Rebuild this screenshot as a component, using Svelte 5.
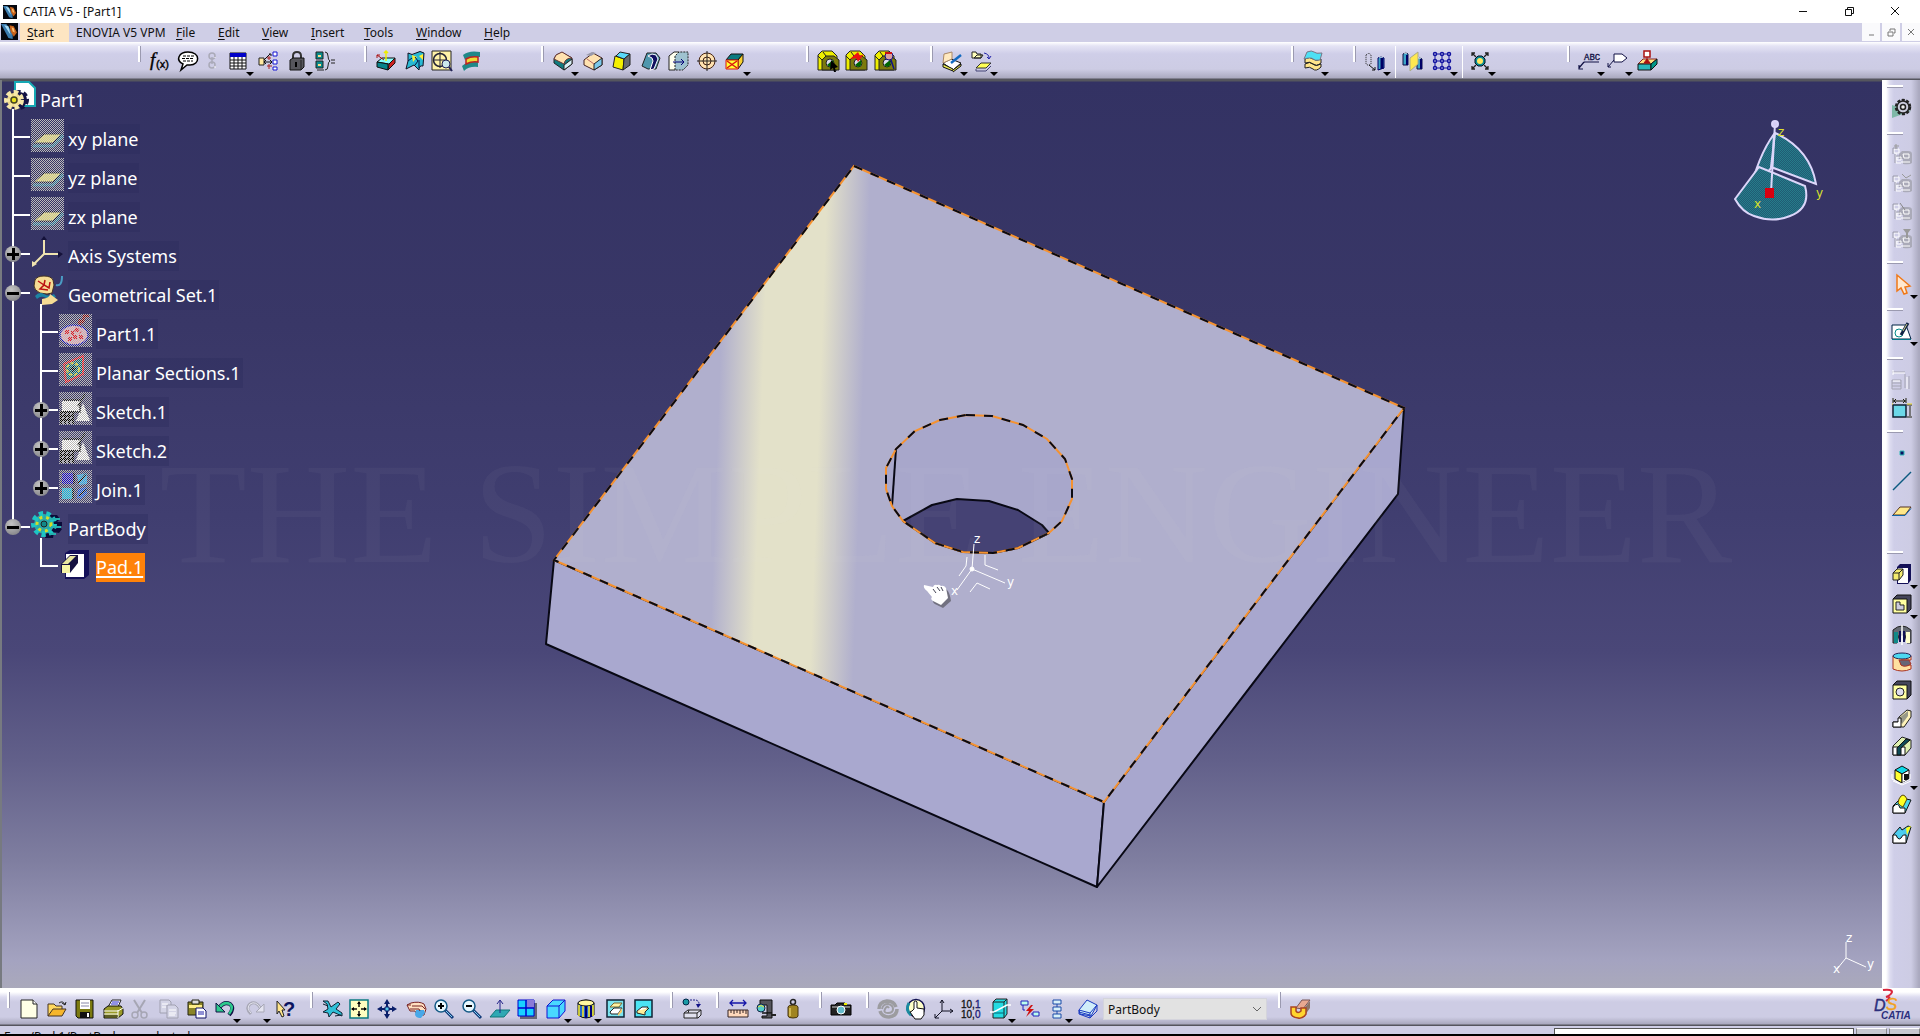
<script>
  const plate = `<path d="M1 5 5 1h14v14l-4 4z" fill="#44445a" stroke="#111"/><path d="M1 5h14v14H1z" fill="#ffffa0" stroke="#111"/>`;
  const catalogNode = (extra) =>
    `<path d="M10 6h6q4 0 4 3v9q-2 2-9 1v-5H7V9z" fill="#aaaab8"/><g fill="none" stroke="#fff"><path d="M2 4h5v4H2zM5 12h4v3H5zM4 8v10h5M11 9h6v4h-5zM9 17h9"/></g><path d="M1 3h5M1 3v6M4 11h4M3 9v9" stroke="#9c9cac" fill="none"/>${extra}`;
  const magnify = (sign) =>
    `<path d="m11 11 8 8" stroke="#123a7a" stroke-width="3"/><path d="m12 12 6 6" stroke="#7fd0ee"/><circle cx="7" cy="7" r="6" fill="#e8f8ff" stroke="#145a86" stroke-width="1.5"/><path d="${sign}" stroke="#000" stroke-width="2"/>`;
  const nut = (over) =>
    `<path d="M0 4 4 0h10l5 5v14H0z" fill="#ee0" stroke="#222"/><path d="M4 19V9l4-4h8l5 4v10z" fill="#7c7a0c" stroke="#222"/><path d="M4 9 0 5M8 5 5 1" stroke="#222"/><circle cx="12" cy="12" r="4" fill="#dde" stroke="#222"/><path d="M9 14l6-5q2 6-3 7z" fill="#060"/>${over}`;

  const icons = {
    formula: `<text x="0" y="15" font-family="Liberation Serif, serif" font-style="italic" font-size="19" stroke="#000" stroke-width=".4">f</text><text x="6" y="17" font-family="Liberation Sans, sans-serif" font-size="11" stroke="#000" stroke-width=".4">(x)</text>`,
    comment: `<path d="M10 1c13 0 12 13 2 13H9l-6 5 2-6C-3 9 1 1 10 1z" fill="#fff" stroke="#000" stroke-width="1.5"/><path d="M5 5h11M4 7.500h12M5 10h10" stroke="#000" stroke-dasharray="3 1"/>`,
    link: `<g fill="none" stroke="#aaaab8" stroke-width="1.500"><circle cx="9" cy="5" r="3"/><circle cx="9" cy="14" r="3"/><path d="M9 6v7"/></g><path d="M12 6v1M12 15v2" stroke="#fff"/>`,
    table: `<path d="M2 2h16v16H2z" fill="#fff" stroke="#111"/><path d="M2 2h16v4H2z" fill="#0000c8"/><path d="M2 9h16M2 12h16M2 15h16M6 6v12M10 6v12M14 6v12" stroke="#111"/>`,
    graph: `<path d="M1 7h5v7H1z" fill="#ffe9a0" stroke="#222"/><g fill="#fff" stroke="#1414d2"><path d="M15 1h4v4h-4zM15 9h4v4h-4zM15 16h4v3h-4z"/></g><path d="M6 9l6-6M7 11h7M11 3h2v2M8 9l-2 2 2 2M12 9l2 2-2 2" fill="none" stroke="#111"/><path d="M9 7h4M11 5v4M9 15h5M11 13v5" stroke="#a22"/>`,
    lock: `<path d="M6 9V5q0-4 4-4t4 4v4" fill="none" stroke="#333" stroke-width="2"/><path d="M3 9l3-2h11v9l-3 3H3z" fill="#56565c" stroke="#111"/><path d="M14 9v10" stroke="#222"/><path d="M8 11h2v5H8z"/>`,
    equiv: `<g fill="#098a8a" stroke="#222"><path d="M1 1h7v7H1zM1 10h7v7H1z"/></g><path d="M3 4h3v2H3zM3 13h3v2H3z" fill="#ffd98a"/><path d="M10 1q3 0 3 4t2 5q-2 1-2 5t-3 4M16 9h4M16 12h4M2 19h7" fill="none" stroke="#222"/>`,
    padTop: `<path d="M1 11 6 7h13l-6 6z" fill="#8ff" stroke="#111"/><path d="M1 11v5l11 3v-6z" fill="#07838a" stroke="#111"/><path d="m13 13 6-6v5l-7 7z" fill="#c22" stroke="#111"/><path d="M10 10V0M8 2l2-2 2 2" stroke="#ee0" fill="none" stroke-width="1.500"/><path d="M8 9 1 4M1 7V4h3" stroke="#a11" fill="none"/>`,
    surface: `<path d="M3 2q4 3 8 0t8 0l-1 13q-4-1-4 4l-5-5-8 4 2-8z" fill="#28b9d4" stroke="#112"/><path d="M7 4l5 2-4 5zM14 5l4-2v6z" fill="#fe3"/><path d="M3 10l4-3M10 6l3 4-3 4M14 9v8" stroke="#014" fill="none"/>`,
    target: `<path d="M0 0h19v19H0z" fill="#fff3a8" stroke="#222"/><circle cx="8" cy="9" r="6.500" fill="none" stroke="#223" stroke-width="1.500"/><path d="M8 1v16M1 9h14" stroke="#223"/><circle cx="14" cy="13" r="4" fill="#cce8ee" stroke="#225"/><path d="m17 16 3 4" stroke="#225" stroke-width="2"/>`,
    draft: `<path d="M2 4q6-5 17-3v5q-12-1-15 3zM1 15q6-5 16-4v5Q8 15 3 20z" fill="#208888"/><path d="M5 8q5-3 12-2v5q-6-1-12 2z" fill="#ed3" stroke="#b22" stroke-width="1.500"/>`,
    fillet: `<path d="M1 8q2-6 9-6l9 5v6l-8 6-10-7z" fill="#117c80" stroke="#222"/><path d="M3 4l6-3 10 6q-7 0-8 6L1 8z" fill="#ffe2b0" stroke="#633"/><path d="m11 14 8-6v5l-8 6z" fill="#d8eef4" stroke="#222"/>`,
    chamfer: `<path d="M1 9l9-7 9 5v7l-8 5-10-5z" fill="#ffe2b0" stroke="#422"/><path d="m11 19V13l8-6v7z" fill="#7cc8ea" stroke="#222"/><path d="M11 13 4 8" stroke="#b66"/><path d="M3 4 9 1l4 1-5 3z" fill="#99a"/>`,
    draftAngle: `<path d="M3 5l9 3-1 11-10-3z" fill="#f4f000" stroke="#222"/><path d="M4 5 8 1l10 2-6 5z" fill="#58d8f8" stroke="#222"/><path d="m12 8 6-5v11l-7 5z" fill="#666a70" stroke="#222"/>`,
    shell: `<path d="M6 2h9l4 5-4 11H7l-6-3z" fill="#4f97ad" stroke="#222"/><path d="M7 5l4-2 4 1 2 4-4 10-4 1 3-9-1-3z" fill="#101060" stroke="#fff"/>`,
    thickness: `<path d="M0 5 5 1h5v14l-4 4H0z" fill="#ffe" stroke="#222"/><path d="M6 19V5l4-4h9v13l-5 5z" fill="#9fc2d0" stroke="#222" stroke-dasharray="2 1"/><path d="M4 11h11M12 8l3 3-3 3" stroke="#007" fill="none"/>`,
    thread: `<circle cx="10" cy="10" r="8" fill="#ffe2b0" stroke="#421"/><circle cx="10" cy="10" r="4" fill="none" stroke="#421"/><path d="M10 0v20M0 10h20" stroke="#222"/>`,
    removeFace: `<path d="M1 9 6 3h12l-5 6z" fill="#0a7a80" stroke="#111"/><path d="m13 9 5-6v8l-5 7z" fill="#f9d030" stroke="#111"/><path d="M1 9h12v9H1z" fill="#ff3" stroke="#d11"/><path d="m2 10 10 7M12 10 2 17" stroke="#d11" stroke-width="1.500"/>`,
    nutPick: nut(`<path d="m13 9 7 7-3 1 1 4h-2l-1-4-3 2z" fill="#000"/>`),
    nutBolt: nut(`<path d="M4 8 12 1l2 4 4-2-6 8-2-4z" fill="#e11"/>`),
    nutScan: nut(`<circle cx="14" cy="5" r="4" fill="#d9a0a0" stroke="#118"/><path d="M10 2h7" stroke="#c11" stroke-width="2"/><path d="m16 9 3 9" stroke="#118" stroke-width="1.500"/>`),
    sketchBook: `<path d="M1 12l8-4 10 4-8 7z" fill="#fff" stroke="#111"/><path d="M1 12l1-9 8-2 0 7z" fill="#ffe9c0" stroke="#a86"/><path d="m9 12 10-8" stroke="#126ac0" stroke-width="2.500"/><path d="M1 13v3l10 4v-2z" fill="#ee5" stroke="#111"/><path d="M11 19l8-6v2l-8 6" fill="#ee5" stroke="#111"/>`,
    openSketch: `<path d="M0 7V1h4l1 2h4v4zM2 7l3-3h6l-2 3z" fill="#ffb" stroke="#222"/><path d="M12 2q5 1 5 5M15 6l2 2 2-3" fill="none" stroke="#22a"/><path d="M4 17l5-5h10l-5 5z" fill="#ff5" stroke="#333"/><path d="M4 18v2h10l5-5" fill="none" stroke="#447"/>`,
    layers: `<path d="M2 13q5-3 8 0t8 0v3q-5 5-8 2T2 17zM2 8q5-3 8 0t8 0v4q-5 4-8 1T2 12z" fill="#ffe48a" stroke="#222"/><path d="M4 1q5-2 7 0t8 1l-2 7q-5 1-7-1T1 8z" fill="#4de0f4" stroke="#778"/>`,
    moveBody: `<path d="M1 4q3-3 5 0v9q-3 2-5 0z" fill="none" stroke="#222" stroke-dasharray="1 1"/><path d="M4 14l6 5M7 19h3v-3" stroke="#111" fill="none"/><path d="M13 7q3-3 6 0v10l-6 2z" fill="#3ca4c8" stroke="#006"/><path d="M17 7v11" stroke="#006" stroke-width="3"/><path d="M14 6h4" stroke="#fff"/>`,
    mirror: `<path d="M0 3q3-3 5 0v11H0zM14 8q3-3 5 0v10h-5z" fill="#3ca4c8" stroke="#114"/><path d="M4 4v10M18 8v10" stroke="#006" stroke-width="2"/><path d="m7 7 8-6v12l-8 7z" fill="#ffe850" stroke="#aa8"/><path d="M1 2h3M15 7h3" stroke="#fff"/>`,
    pattern: `<path d="M3 3h14v14H3zM10 3v14M3 10h14" fill="none" stroke="#1212a0"/><g fill="#dde" stroke="#1212a0" stroke-width="1.500"><circle cx="3" cy="3" r="1.500"/><circle cx="10" cy="3" r="1.500"/><circle cx="17" cy="3" r="1.500"/><circle cx="3" cy="10" r="1.500"/><circle cx="10" cy="10" r="1.500"/><circle cx="17" cy="10" r="1.500"/><circle cx="3" cy="17" r="1.500"/><circle cx="10" cy="17" r="1.500"/><circle cx="17" cy="17" r="1.500"/></g>`,
    scale: `<path d="M2 2l4 4M18 2l-4 4M2 18l4-4M18 18l-4-4M2 5V2h3M15 2h3v3M2 15v3h3M15 18h3v-3" fill="none" stroke="#222" stroke-width="1.300"/><path d="M8 5h4l3 3v4l-3 3H8l-3-3V8z" fill="#0b8c94" stroke="#012"/><circle cx="10" cy="10" r="3" fill="#ffe860"/>`,
    noteText: `<text x="5" y="9" font-family="Liberation Mono, monospace" font-size="9" fill="#114" stroke="#114" stroke-width=".3">ABC</text><path d="M5 11h15M5 11l-5 6M0 14v4h4" fill="none" stroke="#114" stroke-width="1.200"/>`,
    noteFlag: `<path d="M7 3h8l5 4-5 4H7z" fill="#fff" stroke="#114"/><path d="M7 9l-6 7M1 12v4h3" fill="none" stroke="#114"/>`,
    stamp: `<path d="M1 13l5-5h14l-6 5z" fill="#ffe080" stroke="#822"/><path d="M1 13h13v6H1z" fill="#2ab8bc" stroke="#111"/><path d="m14 13 6-5v5l-6 6z" fill="#098" stroke="#111"/><path d="M7 0h6v6H7z" fill="#fff" stroke="#a11" stroke-width="1.500"/><path d="M10 6v5M7 12h6l-3-4z" fill="#a11" stroke="#a11"/>`,
    newFile: `<path d="M2 1h12l4 4v14H2z" fill="#ffffe6" stroke="#222"/><path d="M14 1v4h4" fill="#fff" stroke="#222"/>`,
    open: `<path d="M1 17V5h6l2 2h6v3" fill="#ffd860" stroke="#432"/><path d="m1 17 5-7h13l-4 7z" fill="#f6b62c" stroke="#432"/><path d="M12 4q4-3 6 2M15 4l3 2 1-3" fill="none" stroke="#222"/>`,
    save: `<path d="M1 1h17v18H3l-2-2z" fill="#7b7a10" stroke="#111"/><path d="M5 1h10v9H5z" fill="#fff"/><path d="M6 4h8M6 7h8" stroke="#88a"/><path d="M5 13h10v6H5z" fill="#111"/><path d="M12 14h2v4h-2z" fill="#fff"/>`,
    print: `<path d="M5 8l4-7h9l-3 7z" fill="#fff" stroke="#222"/><path d="M9 3h7M8 5h7" stroke="#22c"/><path d="M1 10l4-3h13l2 3v5l-5 4H1z" fill="#9a9a28" stroke="#111"/><path d="M1 12h14M1 15h14M15 11v8M15 12l5-3" stroke="#fff" fill="none"/><path d="M1 17h14" stroke="#222"/>`,
    cut: `<path d="M4 1l8 13M15 1 7 14" stroke="#a6a6b4" stroke-width="2"/><circle cx="5" cy="16" r="3" fill="none" stroke="#a6a6b4" stroke-width="1.500"/><circle cx="14" cy="16" r="3" fill="none" stroke="#a6a6b4" stroke-width="1.500"/>`,
    copy: `<g fill="#d4d4e6" stroke="#a0a0b0"><path d="M1 1h9l2 2v11H1z"/><path d="M8 6h8l3 3v10H8z"/></g><path d="M3 5h6M3 8h4M10 11h7M10 14h7M10 16h6" stroke="#fff"/>`,
    paste: `<path d="M1 3h15v13H1z" fill="#8a8428" stroke="#221"/><path d="M5 1h7v4H5z" fill="#ddd" stroke="#221"/><path d="M2 6h13v3H2z" fill="#fe8"/><path d="M9 9h7l3 3v7H9z" fill="#fff" stroke="#116"/><path d="M11 13h6M11 15h6" stroke="#22a"/>`,
    undo: `<path d="M4 9q5-7 11-4 5 4-1 11" fill="none" stroke="#114" stroke-width="4"/><path d="M4 9q5-7 11-4 4 4-1 10" fill="none" stroke="#2dc98c" stroke-width="2.500"/><path d="M1 4v9h9z" fill="#2dc98c" stroke="#114"/>`,
    redo: `<path d="M16 10Q11 1 5 5q-5 4 1 10" fill="none" stroke="#a8a8b6" stroke-width="3"/><path d="M16 10Q11 1 5 5q-4 4 1 9" fill="none" stroke="#e4e4f0"/><path d="M19 5v8h-8z" fill="#e4e4f0" stroke="#a8a8b6"/>`,
    help: `<path d="m2 2 8 9-3 0 2 6-2 1-3-6-2 3z" fill="#ffe48a" stroke="#222"/><text x="8" y="17" font-family="Liberation Sans, sans-serif" font-weight="bold" font-size="20" fill="#0c1560">?</text>`,
    fly: `<path d="M1 2h5l3 6 7-5 2 2-4 5 6 4v3l-9-4-4 5-1-4-5-1 5-3-1-5z" fill="#30c0d8" stroke="#123"/><path d="M1 5l5 2M13 17l6-1" stroke="#123"/>`,
    fitAll: `<path d="M1 1h18v18H1z" fill="#ffffc0" stroke="#0a7a80" stroke-width="1.500"/><path d="M10 3v5M10 12v5M3 10h5M12 10h5" stroke="#111" stroke-width="1.500"/><path d="m8 5 2-3 2 3zM8 15l2 3 2-3zM5 8l-3 2 3 2zM15 8l3 2-3 2z"/>`,
    pan: `<path d="M10 2v16M2 10h16" stroke="#0a1e6a" stroke-width="2"/><path d="m7 5 3-5 3 5zM7 15l3 5 3-5zM5 7l-5 3 5 3zM15 7l5 3-5 3z" fill="#0a1e6a"/><path d="M8 8h4v4H8z" fill="#58c8e8" stroke="#0a1e6a"/>`,
    rotate: `<path d="M1 6l4-2q8-2 13 1l2 5-2 6-6 1-3-5H4l-1-2z" fill="#ffe0c0" stroke="#722"/><path d="M10 11h8l1 3-4 5q-6 0-6-4z" fill="#48a8e8"/><path d="M1 6h4M6 7h10l3 3M4 10h9l1 2" stroke="#722" fill="none"/>`,
    zoomIn: magnify('M4 7h6M7 4v6'),
    zoomOut: magnify('M4 7h6'),
    normalView: `<path d="m0 18 6-7h14l-6 7z" fill="#2fa8b4" stroke="#177"/><path d="M10 14V2M7 5l3-4 3 4" fill="none" stroke="#228"/>`,
    multiView: `<path d="M3 4h17v16H3z" fill="#667"/><path d="M1 1h16v16H1z" fill="#19d2ff" stroke="#00c" /><path d="M10 1h7v8h-7z" fill="#8c7ad8"/><path d="M9 1v16M1 9h16" stroke="#00c" stroke-width="1.500"/>`,
    isoView: `<path d="M1 7l6-6h12v11l-6 7H1z" fill="#49d8ff" stroke="#1212d0"/><path d="M1 7h12v12M13 7l6-6" fill="none" stroke="#1212d0"/>`,
    shading: `<path d="M2 4q8-6 16 0v12q-8 6-16 0z" fill="#2468cc" stroke="#111"/><ellipse cx="10" cy="4" rx="8" ry="3" fill="#fff8a0" stroke="#111"/><path d="M3 6v11M7 7v11M13 7v11M17 6v11" stroke="#fe2" stroke-width="1.500"/><path d="M10 7v12M15 7v11" stroke="#007" stroke-width="2"/>`,
    hideShow: `<path d="M1 1h17v17H1z" fill="#7be4f0" stroke="#123" stroke-width="1.500"/><path d="M4 8l4-4h8l-3 4z" fill="#fff2a0" stroke="#763"/><path d="M4 13l4-4h8l-4 6H5z" fill="#fff" stroke="#222"/><path d="m12 15 4-6v4l-4 4z" fill="#fc6"/>`,
    swapSpace: `<path d="M1 1h17v17H1z" fill="#4ce4f4" stroke="#123" stroke-width="1.500"/><path d="M3 12l5-4h6l-3 5z" fill="#fff" stroke="#222"/><path d="M3 12v2l8 2v-3l4-4" fill="#fe9" stroke="#222"/>`,
    transfer: `<circle cx="4" cy="3" r="3" fill="#1a9aa6" stroke="#024"/><path d="M8 1h6q3 1 3 4" fill="none" stroke="#228" stroke-dasharray="2 1"/><path d="m14 5 5 0-3 4z" fill="#118"/><path d="M2 14l4-3h13v5l-3 3H2zM2 14h13v5M15 14l4-3M7 11l-1 3" fill="#e0e0ee" stroke="#222"/>`,
    ruler: `<path d="M2 4h16M5 1 2 4l3 3M15 1l3 3-3 3" fill="none" stroke="#1515a8" stroke-width="1.300"/><path d="M0 11h20v7H0z" fill="#ffd9bc" stroke="#322"/><path d="M3 11v3M6 11v4M9 11v3M12 11v4M15 11v3M18 11v4" stroke="#322"/>`,
    measureItem: `<path d="M4 1h12v13h-5v-8H4z" fill="#55555c" stroke="#111"/><path d="M6 14h10v5H6v-2h5v-3z" fill="#55555c" stroke="#111"/><path d="M15 16h5" stroke="#222" stroke-width="2"/><circle cx="5" cy="9" r="4" fill="#5cc" stroke="#124"/><path d="M2 8q3-3 6 0" stroke="#ed3" fill="none"/>`,
    inertia: `<circle cx="10" cy="3" r="2.500" fill="none" stroke="#222" stroke-width="1.500"/><path d="M5 8q0-2 5-2t5 2v9q0 2-5 2t-5-2z" fill="#a08420" stroke="#431"/><path d="M7 9v8" stroke="#e0c860" stroke-width="1.500"/>`,
    camera: `<path d="M0 6h4l2-2h8l2 2h4v10H0z" fill="#222" stroke="#000"/><path d="M1 8h18" stroke="#ccc"/><circle cx="10" cy="11" r="4" fill="#6bc" stroke="#fff"/><path d="M13 5h3" stroke="#ee0" stroke-width="2"/>`,
    update: `<path d="M18 8Q16 2 9 2 1 3 1 10M2 12q2 6 9 6 8-1 8-8" fill="none" stroke="#9c9ca0" stroke-width="3.500"/><path d="M4 10q1-5 6-5 5 1 5 5t-5 4-3-4 4-1" fill="none" stroke="#9c9ca0" stroke-width="2"/>`,
    manualUpdate: `<circle cx="10" cy="9" r="8.500" fill="#ffffc8" stroke="#101050" stroke-width="1.500"/><path d="M3 4q-4 7 2 12" stroke="#1a8aa0" stroke-width="3" fill="none"/><path d="M8 10V3q2-2 3 0v6l7 1v6l-3 4H9l-5-7 2-1z" fill="#fff" stroke="#111"/>`,
    axis: `<path d="M8 1v11h11M8 12l-7 7M6 4l2-3 2 3M16 10l3 2-3 2M1 15v4h4" fill="none" stroke="#112"/>`,
    meanDims: `<text x="0" y="9" font-family="Liberation Sans, sans-serif" font-size="10" fill="#111" stroke="#111" stroke-width=".3">10,<tspan fill="#22c">1</tspan></text><text x="0" y="19" font-family="Liberation Sans, sans-serif" font-size="10" fill="#111" stroke="#111" stroke-width=".3">10,<tspan fill="#22c">0</tspan></text>`,
    section: `<path d="M3 3 6 0h11v15l-3 4H3z" fill="#24dbe2" stroke="#222"/><path d="M3 3h11v16M14 3l3-3" fill="none" stroke="#222"/><path d="M0 13h4l13-7h4" stroke="#fff" stroke-width="1.500" fill="none"/><path d="M4 14h10" stroke="#067"/>`,
    breakLink: `<path d="M1 2h7v4H1zM13 13h6v4h-6z" fill="#bfe" stroke="#22b"/><path d="M3 6v5h2M11 15h2" stroke="#22b" fill="none"/><path d="m11 6-5 6h3l-3 6 8-8h-4l3-4z" fill="#c11"/>`,
    stack: `<path d="M6 1h8v4H6zM6 8h8v4H6zM6 15h8v4H6z" fill="#d8f0f8" stroke="#1a4aa8"/><path d="M10 5v3M10 12v3" stroke="#1a4aa8"/>`,
    bodyBox: `<path d="M1 11 9 1l10 5-6 11-11-2z" fill="#d0eefa" stroke="#1a3ac0"/><path d="M1 11l11 3 7-8M1 13l11 3M12 14v5l7-7V6M1 11v4l11 4" fill="none" stroke="#1a3ac0"/>`,
    catalogPipe: `<path d="M6 9 12 1h8l-7 9z" fill="#e8a890" stroke="#755"/><path d="m13 11 7-9v7l-5 7z" fill="#8c7468"/><path d="M1 8h5v4q2 3 5 0V9h5v6q-3 5-8 4-7-1-7-5z" fill="#ffd52e" stroke="#a42" stroke-width="1.500"/>`,
    gear: `<path d="M0 7v13l19-7z" fill="#7fb8a8"/><circle cx="11" cy="9" r="7" fill="none" stroke="#222" stroke-width="2.500" stroke-dasharray="3 1.500"/><circle cx="11" cy="9" r="6" fill="#ccd" stroke="#222" stroke-width="1.500"/><circle cx="11" cy="9" r="2.500" fill="#eee" stroke="#222" stroke-width="1.500"/>`,
    node1: catalogNode('<path d="M4 -1v5M2 1h5" stroke="#999"/>'),
    node2: catalogNode('<path d="M10 1l4 4 5-3" stroke="#999" fill="none"/>'),
    node3: catalogNode('<path d="M8 2l5 7" stroke="#888"/>'),
    node4: catalogNode('<path d="M11 0h8l-3 4v5h-2V4z" fill="#999"/>'),
    select: `<path d="M5 1v16l4-3 3 6 3-1-2-6 5-1z" fill="#ffe8d0" stroke="#f07818" stroke-width="1.500"/>`,
    sketch: `<path d="M0 4h14l5 14H0z" fill="#fff" stroke="#024"/><path d="M0 18.500h19" stroke="#078"/><circle cx="7" cy="12" r="4" fill="none" stroke="#088"/><path d="m9 14 7-12" stroke="#124" stroke-width="3"/><path d="m11 10 4-7" stroke="#cc8"/>`,
    constraintOff: `<path d="M0 2h13M0 10h9v9H0zM17 6v13M0 13h9M0 16h9M13 4v14" stroke="#a4a4b2" fill="none"/><path d="M1 3h12M15 7v12M1 11h7M1 5V0" stroke="#fff"/>`,
    constraint: `<path d="M1 7h13v12H1z" fill="#6cd8e8" stroke="#123" stroke-width="1.500"/><path d="M1 0v5M14 0v5M1 3h13M15 7h5M15 19h5M18 8v10M4 1 2 3l2 2M11 1l2 2-2 2" stroke="#221" fill="none"/><path d="M0 6h1M15 6h5" stroke="#ed2"/>`,
    point: `<path d="M8 8h4v4H8z" fill="#0c1060" stroke="#3bb"/>`,
    line: `<path d="M1 19 19 1" stroke="#0b5a80" stroke-width="1.500"/>`,
    plane: `<path d="M1 14 8 6h11l-6 8z" fill="#ffe888" stroke="#532"/><path d="M0 14.500h13l6-7" stroke="#16a" fill="none"/>`,
    pad: `<path d="M5 3 8 0h11v16l-3 4H5z" fill="#141058"/><path d="M6 4h10v15H6z" fill="#fff"/><path d="M1 9l4-4h6v6l-4 5H1z" fill="#f4ec70" stroke="#222"/><path d="M1 9h6v7M7 9l4-4" fill="none" stroke="#222"/>`,
    pocket: `${plate}<path d="M4 8h4v3h4v5H4z" fill="#ccd" stroke="#222"/>`,
    shaft: `<path d="M1 5q9-8 18 0v13h-4l-2-8H7l-2 8H1z" fill="#666a74" stroke="#222"/><path d="M2 7h4v11H2z" fill="#188"/><path d="M14 7h4v11h-4z" fill="#ffc"/><path d="M10 0v20" stroke="#fff" stroke-width="1.500"/><path d="M8 6v11M12 6v11" stroke="#115" stroke-width="2"/>`,
    groove: `<path d="M1 4v13q9 4 18 0v-4H9V8h10V4z" fill="#ffe0a0" stroke="#a32"/><ellipse cx="10" cy="4" rx="9" ry="3" fill="#4cd8f0" stroke="#225"/><path d="M7 8h10l2 4q-6 4-10 1z" fill="#667" stroke="#a32"/>`,
    hole: `${plate}<circle cx="8" cy="12" r="4" fill="#dde" stroke="#222"/>`,
    rib: `<path d="M1 13h6V8L15 1l4 1v6l-7 10H1z" fill="#fff3b8" stroke="#222"/><path d="M7 9 16 2v5l-6 8z" fill="#998" /><path d="M1 13h5v-4h3v9H1z" fill="#fff" stroke="#111"/>`,
    slot: `<path d="M1 10 10 1l9 3v8l-6 7H1z" fill="#dff0b0" stroke="#222"/><path d="M1 11h12v8H1z" fill="#fff" stroke="#111"/><path d="M5 19v-7l9-9 4 1-9 8v7z" fill="#0e4a58" stroke="#111"/>`,
    solidCombine: `<path d="M3 5l7-4 7 4-7 4z" fill="#10d8e8" stroke="#111"/><path d="M3 5l7 4v9l-7-4z" fill="#ff3" stroke="#111"/><path d="M17 5l-7 4v9l7-4z" fill="#fff" stroke="#111"/><path d="M12 9h5v6h-5z" fill="#111"/><path d="M0 9v5l9 5 9-5V9M1 16l9 4 9-4" stroke="#fff" fill="none"/>`,
    multiSection: `<path d="M1 12 9 4l10 2-6 13H1z" fill="#4cd8ee" stroke="#111"/><path d="M1 13q5-6 7 1h5v5H1z" fill="#fff" stroke="#111"/><path d="M7 5q4-8 8 0l-4 8q-3-1-5-4z" fill="#ff2" stroke="#541"/>`,
    removedSection: `<path d="M1 11 8 3l2 3 6-4 3 1-5 16H1z" fill="#4cc8ee" stroke="#111"/><path d="M1 11h3q3 8 7 0h3v8H1z" fill="#fff" stroke="#111"/><path d="M14 4l5-2-4 9z" fill="#ff2"/><path d="M5 7h6l1 3-5 4z" fill="#4ad0f0"/>`,
  };

  const topGroups = [
    { w: 226, tools: [['formula', 'Formula', 28], ['comment', 'Comment', 25], ['link', 'URLs and comment', 25], ['table', 'Design table', 30, 1], ['graph', 'Law', 29], ['lock', 'Lock', 28, 1], ['equiv', 'Equivalent dimensions', 28]] },
    { w: 177, tools: [['padTop', 'Draft analysis', 29], ['surface', 'Curvature analysis', 27], ['target', 'Tap thread analysis', 29], ['draft', 'Wall thickness analysis', 28]] },
    { w: 265, tools: [['fillet', 'Edge fillet', 30, 1], ['chamfer', 'Chamfer', 29], ['draftAngle', 'Draft angle', 29, 1], ['shell', 'Shell', 28], ['thickness', 'Thickness', 28], ['thread', 'Thread', 28], ['removeFace', 'Remove face', 28, 1]] },
    { w: 124, tools: [['nutPick', 'Select part', 28], ['nutBolt', 'Update part', 29], ['nutScan', 'Scan part', 28]] },
    { w: 361, tools: [['sketchBook', 'Create sketch', 30, 1], ['openSketch', 'Open sketch', 28, 1]] },
    { w: 62, tools: [['layers', 'Split', 28, 1]] },
    { w: 214, tools: [['moveBody', 'Translation', 38, 1], ['mirror', 'Mirror', 29, 0, 1], ['pattern', 'Rectangular pattern', 38, 1], ['scale', 'Scaling', 28, 1, 1]] },
    { w: 120, tools: [['noteText', 'Text with leader', 28, 1], ['noteFlag', 'Flag note', 30, 1], ['stamp', '3D annotation', 28]] },
  ];

  const bottomGroups = [
    { w: 303, tools: [['newFile', 'New', 28], ['open', 'Open', 28], ['save', 'Save', 28], ['print', 'Quick print', 27], ['cut', 'Cut', 29], ['copy', 'Copy', 28], ['paste', 'Paste', 28], ['undo', 'Undo', 30, 1], ['redo', 'Redo', 30, 1], ['help', "What's this?", 20]] },
    { w: 360, tools: [['fly', 'Fly mode', 27], ['fitAll', 'Fit all in', 28], ['pan', 'Pan', 29], ['rotate', 'Rotate', 28], ['zoomIn', 'Zoom in', 28], ['zoomOut', 'Zoom out', 28], ['normalView', 'Normal view', 27], ['multiView', 'Create multi-view', 29], ['isoView', 'Isometric view', 30, 1], ['shading', 'Shading with edges', 30, 1], ['hideShow', 'Hide/Show', 28], ['swapSpace', 'Swap visible space', 20]] },
    { w: 46, tools: [['transfer', 'Catalog browser', 28]] },
    { w: 103, tools: [['ruler', 'Measure between', 28], ['measureItem', 'Measure item', 27], ['inertia', 'Measure inertia', 28]] },
    { w: 47, tools: [['camera', 'Capture', 28]] },
    { w: 412, body: true, tools: [['update', 'Update all', 28], ['manualUpdate', 'Manual update mode', 28], ['axis', 'Axis system', 27], ['meanDims', 'Mean dimensions', 29], ['section', 'Dynamic sectioning', 30, 1], ['breakLink', 'Only current body', 27], ['stack', 'Insert in new body', 31, 1], ['bodyBox', 'Current body', 25]] },
    { w: 60, tools: [['catalogPipe', 'Apply material', 28]] },
  ];

  const sideGroups = [
    { w: 47, tools: [['gear', 'Part Design', 28]] },
    { w: 129, tools: [['node1', 'Power copy', 28], ['node2', 'User feature', 28], ['node3', 'Document template', 28], ['node4', 'Instantiate', 28]] },
    { w: 47, tools: [['select', 'Select', 28, 1]] },
    { w: 49, tools: [['sketch', 'Sketch', 28, 1]] },
    { w: 73, tools: [['constraintOff', 'Constraints in dialog', 28], ['constraint', 'Constraint', 28]] },
    { w: 121, tools: [['point', 'Point', 28], ['line', 'Line', 30], ['plane', 'Plane', 28]] },
    { w: 320, tools: [['pad', 'Pad', 30, 1], ['pocket', 'Pocket', 31, 1], ['shaft', 'Shaft', 27], ['groove', 'Groove', 28], ['hole', 'Hole', 29], ['rib', 'Rib', 27], ['slot', 'Slot', 29], ['solidCombine', 'Solid combine', 29, 1], ['multiSection', 'Multi-sections solid', 30], ['removedSection', 'Removed multi-sections solid', 28]] },
  ];

  const treeArt = {
    plane: `<path d="M3 24 13 15h18L22 24z" fill="#f2e878" stroke="#112"/><path d="M2 27h20l10-11" fill="none" stroke="#1f7098" stroke-width="3"/>`,
    sketch: `<path d="M3 9h18v10H3z" fill="#fff"/><path d="M2 20h13v12H2z" fill="#99a"/><path d="M2 20h13M2 24h13M2 28h13M2 20v12M6 20v12M10 20v12M14 20v12" fill="none" stroke="#000" stroke-width="2"/><path d="M24 11l7 18H17z" fill="#fff"/><path d="M4 8h17M26 2l-7 12M21 12v8h-6" stroke="#111" fill="none" stroke-width="1.500"/>`,
    axes: `<g fill="none" stroke="#f0e4b0" stroke-width="2"><path d="M13 3v15M13 18h14M13 18 3 28"/></g><path d="M10 4l3-4 3 4zM27 15l5 3-5 4z" fill="#15123a"/><path d="M1 25v6l5-3z" fill="#f0e4b0"/>`,
    geoSet: `<path d="M4 5q2-4 9-4t9 4l1 5-2 8q-4 2-12 0-6-3-6-7z" fill="#f6dc94" stroke="#432"/><path d="M7 6l6 4-4 4 8 1M14 5l-1 5 5 3 1-6" stroke="#b11" fill="none" stroke-width="1.500"/><path d="M4 21q4-5 9-2t10 0l2 3q-5 4-10 1t-9 1z" fill="#1c84a4"/><path d="M11 24q8-1 8-5l8 6-6 4-10 1z" fill="#f6dc94"/><path d="M25 10q6 2 6-9" stroke="#4a9cc4" fill="none" stroke-width="2"/>`,
    surf: `<ellipse cx="15" cy="21" rx="14" ry="10" fill="#ecb4c0" stroke="#1010c0" stroke-width="1.500"/><path d="M6 18h6M14 23h10M16 15l6 3M9 25h5M12 19h3" stroke="#f01020" stroke-width="4" stroke-dasharray="4 2"/><path d="M19 8h5l1-6h5M21 5v6" stroke="#800" fill="none" stroke-width="2.500"/>`,
    sections: `<path d="M5 11 24 3v18L7 29z" fill="#006870" stroke="#e01" stroke-width="2"/><circle cx="14" cy="16" r="6" fill="none" stroke="#f0e000" stroke-width="2" stroke-dasharray="3 2"/><path d="M11 16h6M14 13v6" stroke="#000" stroke-width="1.500"/>`,
    join: `<path d="M3 3h12v11H3z" fill="#1000c8"/><path d="M3 18h11v11H3z" fill="#00b8e8"/><path d="M18 5l10-2v11l-8 1z" fill="#10a8f8"/><path d="M18 28l1-9 9-2v7l-6 5z" fill="#0048e8"/><path d="M19 13l8-9M20 26l8-7M15 3v11M14 18v11" stroke="#000" stroke-width="1.500"/>`,
    body: `<path d="M16 6h10l3 4-3 3h5v4h-4l4 3-3 4-5-1-1 6h-8z" fill="#0b0b38"/><circle cx="13" cy="15" r="10" fill="#2aa8a8" stroke="#1cc4c4" stroke-width="6" stroke-dasharray="4 3"/><circle cx="13" cy="15" r="7" fill="none" stroke="#d6dc28" stroke-width="3" stroke-dasharray="3 4"/><circle cx="13" cy="15" r="3" fill="#188" stroke="#222"/><path d="M19 10h10M20 18h10M18 25h7" stroke="#25b0b0" stroke-width="2"/>`,
    pad: `<path d="M6 5 11 2h19v25l-5 4H6z" fill="#141058"/><path d="M7 6h18v23H7z" fill="#fff"/><path d="M2 16l9-9h8v8l-8 10H2z" fill="#141040"/><path d="M3 16l8-8h6l-8 8z" fill="#e8e6a0"/><path d="M3 17h8v8H3z" fill="#f6f4a4"/>`,
  };

  const tree = [
    { art: 'plane', label: 'xy plane', mesh: true },
    { art: 'plane', label: 'yz plane', mesh: true },
    { art: 'plane', label: 'zx plane', mesh: true },
    { art: 'axes', label: 'Axis Systems', knob: '+' },
    {
      art: 'geoSet', label: 'Geometrical Set.1', knob: '-', children: [
        { art: 'surf', label: 'Part1.1', mesh: true },
        { art: 'sections', label: 'Planar Sections.1', mesh: true },
        { art: 'sketch', label: 'Sketch.1', mesh: true, knob: '+' },
        { art: 'sketch', label: 'Sketch.2', mesh: true, knob: '+' },
        { art: 'join', label: 'Join.1', mesh: true, knob: '+' },
      ],
    },
    { art: 'body', label: 'PartBody', knob: '-', children: [{ art: 'pad', label: 'Pad.1', active: true }] },
  ];

  const menus = [['S', 'tart'], ['', 'ENOVIA V5 VPM'], ['F', 'ile'], ['E', 'dit'], ['V', 'iew'], ['I', 'nsert'], ['T', 'ools'], ['W', 'indow'], ['H', 'elp']];

  const rim = '966,415 992,416 1023,425 1047,439 1065,459 1072,479 1072,499 1062,521 1049,533 1018,548 993,553 963,552 935,543 903,521 892,506 886,489 886,468 896,449 915,431 940,420';
  const topFace = '854,166 1404,408 1104,802 554,560';
  let currentBody = $state('PartBody');
</script>

{#snippet appMark()}
  <svg class="mark" viewBox="0 0 16 16" aria-hidden="true">
    <path d="M0 0h16v16H0z" fill="#05070d" />
    <path d="M0 1h5l6 8 0 6-4-1z" fill="#3b7cae" />
    <path d="M3 2l4 1 2 8z" fill="#a8dcf4" />
    <path d="M8 2l4 1 3 6-3 4-3-5z" fill="#c5601a" />
    <path d="M10 4l2 1 1 4-2-1z" fill="#ffc070" />
  </svg>
{/snippet}

{#snippet group(g, axis)}
  <div class="group" style:width={axis === 'x' ? g.w + 'px' : null} style:height={axis === 'y' ? g.w + 'px' : null}>
    <span class="grip"></span>
    {#each g.tools as [icon, label, step, arrow, ruled]}
      <button class="tool" class:ruled type="button" aria-label={label} style:flex-basis={step + 'px'}>
        <svg class="glyph" viewBox="0 0 20 20" aria-hidden="true">{@html icons[icon]}</svg>
        {#if arrow}<span class="arrow"></span>{/if}
      </button>
    {/each}
    {#if g.body}
      <select class="body-pick" aria-label="In work object" bind:value={currentBody}>
        <option>PartBody</option>
      </select>
      <svg class="chevron" viewBox="0 0 10 6" aria-hidden="true"><path d="m1 1 4 4 4-4" fill="none" stroke="#666" /></svg>
    {/if}
  </div>
{/snippet}

{#snippet branch(nodes)}
  <ul class="branch">
    {#each nodes as node}
      <li>
        <div class="row">
          {#if node.knob}<button class="knob" class:minus={node.knob === '-'} type="button" aria-label={(node.knob === '-' ? 'Collapse ' : 'Expand ') + node.label}></button>{/if}
          <svg class="art" viewBox="0 0 33 33" aria-hidden="true">
            {@html treeArt[node.art]}
            {#if node.mesh}<rect width="33" height="33" fill="url(#mesh)" />{/if}
          </svg>
          <span class="label" class:active={node.active}>{node.label}</span>
        </div>
        {#if node.children}{@render branch(node.children)}{/if}
      </li>
    {/each}
  </ul>
{/snippet}

<div class="app">
  <header class="title">
    {@render appMark()}
    <span class="caption">CATIA V5 - [Part1]</span>
    <button type="button" aria-label="Minimize"><svg viewBox="0 0 10 10"><path d="M1 5.500h8" /></svg></button>
    <button type="button" aria-label="Restore"><svg viewBox="0 0 10 10"><path d="M1.500 3.500h6v6h-6zM3.500 3V1.500h6v6H8" /></svg></button>
    <button type="button" aria-label="Close"><svg viewBox="0 0 10 10"><path d="m1 1 8 8M9 1 1 9" /></svg></button>
  </header>

  <nav class="menu">
    {@render appMark()}
    {#each menus as [key, rest], i}
      <button type="button" class="item" class:hot={i === 0}>{#if key}<u>{key}</u>{/if}{rest}</button>
    {/each}
    <div class="mdi">
      <button type="button" aria-label="Minimize document"><svg viewBox="0 0 10 10"><path d="M3 8h5" /></svg></button>
      <button type="button" aria-label="Restore document"><svg viewBox="0 0 10 10"><path d="M2 5h5v4H2zM4 4V2h5v4H8" /></svg></button>
      <button type="button" aria-label="Close document"><svg viewBox="0 0 10 10"><path d="m2 2 6 6M8 2 2 8" /></svg></button>
    </div>
  </nav>

  <div class="bar top">
    {#each topGroups as g}{@render group(g, 'x')}{/each}
  </div>

  <main class="view">
    <svg class="scene" viewBox="0 80 1882 908" aria-label="Part with a square pad and a round hole">
      <defs>
        <linearGradient id="shine" gradientUnits="userSpaceOnUse" x1="718" y1="0" x2="862" y2="0" gradientTransform="rotate(2 790 420)">
          <stop offset="0" stop-color="#e3e1c9" stop-opacity="0" />
          <stop offset=".3" stop-color="#e3e1c9" />
          <stop offset=".7" stop-color="#e3e1c9" />
          <stop offset="1" stop-color="#e3e1c9" stop-opacity="0" />
        </linearGradient>
        <pattern id="weave" width="2" height="2" patternUnits="userSpaceOnUse">
          <path d="M0 0h2v2H0z" fill="#205c74" />
          <path d="M0 0h1v1H0zM1 1h1v1H1z" fill="#267c8a" />
        </pattern>
        <pattern id="mesh" width="2" height="2" patternUnits="userSpaceOnUse">
          <path d="M0 0h1v1H0zM1 1h1v1H1z" fill="#bcbab8" shape-rendering="crispEdges" />
        </pattern>
      </defs>
      <g class="edge">
        <polygon points="554,560 1104,802 1097,887 546,644" fill="#a9a8cf" />
        <polygon points="1104,802 1404,408 1398,494 1097,887" fill="#a8a7ce" />
      </g>
      <polygon points={topFace} fill="#b0afcd" />
      <polygon points={topFace} fill="url(#shine)" />
      <polygon points={rim} fill="#a8a7cb" />
      <polygon class="edge" points="903,521 932,505 957,499 989,501 1018,510 1042,525 1049,533 1018,548 993,553 963,552 935,543" fill="#454274" />
      <path class="edge" d="M896 449 892 506" />
      <g class="picked">
        <polygon points={topFace} />
        <polygon points={rim} />
      </g>
      <g class="picked dash">
        <polygon points={topFace} />
        <polygon points={rim} />
      </g>
      <text class="watermark" x="946" y="562" text-anchor="middle">THE SIMPLE ENGINEER</text>
      <g class="triad">
        <path d="M972 569 974 544M972 569l33 14M972 569l-15 21M985 555v10l13 5M967 557l-1 9-7 10M970 592l7-9 13 6" />
        <circle cx="972" cy="569" r="2" />
        <text x="974" y="543">z</text><text x="1007" y="586">y</text><text x="951" y="595">x</text>
        <path d="M1846 958v-16M1846 958l20 9M1846 958l-9 11" />
        <text x="1846" y="942">z</text><text x="1867" y="968">y</text><text x="1833" y="973">x</text>
      </g>
      <path d="M925 586q-2 2 3 5l6 6-3 1q-1 3 4 5l6 3 8-7q-1-8-4-11-3-3-5-1l-3-1-3 0-2 2z" transform="translate(2 2)" fill="#333" fill-opacity=".5" />
      <path d="M924 585q-1 3 3 6l5 6q-2 2 1 4l8 4 7-7-2-10q-2-3-5-2-2-2-4-1-3-1-4 2z" fill="#fff" />
      <path d="M933 589l3 4M937 587l3 4M941 587l2 4" stroke="#445" fill="none" />
      <g class="compass">
        <path d="M1775 133q35 16 41 51l-45-17zM1774 134q-16 22-25 61l23-28z" />
        <path d="m1735 199 24-32 46 19q6 22-15 30-17 7-36 0-12-4-19-17z" />
        <path d="M1775 124 1771 192" />
        <circle cx="1775" cy="124" r="3" />
      </g>
      <path d="M1765 188h9v10h-9z" fill="#d80010" />
      <g class="names"><text x="1778" y="136">z</text><text x="1816" y="197">y</text><text x="1754" y="208">x</text></g>
    </svg>

    <div class="tree">
      <div class="row root">
        <svg class="art" viewBox="0 0 33 33" aria-hidden="true">
          <path d="M12 2h14l6 6v18H12z" fill="#fff" stroke="#16a8b4" stroke-width="2" />
          <circle cx="16" cy="20" r="8" fill="#141444" stroke="#141444" stroke-width="4" stroke-dasharray="4 3" />
          <circle cx="11" cy="20" r="7" fill="#f0d98a" stroke="#f6e8a8" stroke-width="6" stroke-dasharray="4 2.500" />
          <circle cx="11" cy="20" r="3" fill="#e8e020" stroke="#442" stroke-width="1.500" />
        </svg>
        <span class="label">Part1</span>
      </div>
      {@render branch(tree)}
    </div>
  </main>

  <aside class="side">
    {#each sideGroups as g}{@render group(g, 'y')}{/each}
  </aside>

  <div class="bar bottom">
    {#each bottomGroups as g}{@render group(g, 'x')}{/each}
    <svg class="brand" viewBox="0 0 42 32" aria-label="CATIA">
      <path d="M10 1q9-1 9 2-1 3-6 5M13 8q7-1 0 4" fill="none" stroke="#d9263c" stroke-width="2" />
      <text x="1" y="22" font-size="16" stroke="#2b2f7c" stroke-width=".4" fill="#2b2f7c">D</text>
      <text x="13" y="21" font-size="17" stroke="#f2a21c" stroke-width=".4" fill="#f2a21c">S</text>
      <text x="8" y="30" font-size="10" font-weight="bold" fill="#2b2f7c">CATIA</text>
    </svg>
  </div>

  <footer class="status">
    <span class="message">Face/Pad.1/PartBody preselected</span>
    <input class="command" aria-label="Power input" />
    <button type="button" aria-label="Command list"></button>
    <button type="button" aria-label="Dialog"></button>
  </footer>
</div>

<style>
  :global(body) {
    margin: 0;
    overflow: hidden;
  }
  .app {
    display: grid;
    grid-template: 23px 19px 38px 1fr 38px 10px / 1fr 38px;
    height: 100vh;
    font-family: "Noto Sans", "Open Sans", sans-serif;
    font-size: 12px;
    color: #111;
    background: #cfcee6;
  }
  button {
    margin: 0;
    padding: 0;
    border: 0;
    background: none;
    font: inherit;
    color: inherit;
  }
  .title,
  .menu,
  .top,
  .bottom,
  .status {
    grid-column: 1 / -1;
  }
  .title {
    display: flex;
    align-items: center;
    background: #fff;
    padding: 0 2px 0 3px;
  }
  .mark {
    width: 14px;
    height: 14px;
  }
  .caption {
    flex: 1;
    margin-left: 6px;
  }
  .title button {
    width: 46px;
    height: 22px;
  }
  .title button svg {
    width: 10px;
    height: 10px;
    fill: none;
    stroke: #111;
  }
  .menu {
    display: grid;
    grid-template-columns: 20px 49px 100px 42px 44px 49px 53px 52px 68px 60px 1fr;
    align-items: stretch;
  }
  .menu .mark {
    width: 19px;
    height: 17px;
  }
  .item {
    text-align: left;
    padding-left: 7px;
    line-height: 18px;
    white-space: nowrap;
  }
  .hot {
    background: #fde5c2;
  }
  .item u {
    text-underline-offset: 2px;
  }
  .mdi {
    display: flex;
    justify-content: flex-end;
    gap: 2px;
    height: 18px;
  }
  .mdi button {
    width: 18px;
    background: #fafafc;
  }
  .mdi svg {
    width: 10px;
    height: 10px;
    fill: none;
    stroke: #777;
  }
  .bar {
    display: flex;
    background: linear-gradient(#fff 0, #e4e3f4 4px, #cfcee8 12px, #cdcce4 27px, #aaa9bf 36px, #55555e 37px);
  }
  .top {
    padding-left: 138px;
  }
  .bottom {
    padding-left: 7px;
    background: linear-gradient(#fff 0, #fff 4px, #dddcf0 9px, #cdcce4 14px, #cdcce4 29px, #a9a8be 36px, #55555e 37px);
  }
  .group {
    display: flex;
    flex: none;
    position: relative;
  }
  .grip {
    flex: none;
    box-sizing: border-box;
    width: 3px;
    height: 16px;
    margin: 4px 9px 0 0;
    border-right: 1px solid #9b9ab0;
    background: #fff;
  }
  .tool {
    position: relative;
    flex: 0 0 28px;
    text-align: left;
    line-height: 0;
  }
  .ruled::before {
    content: "";
    position: absolute;
    left: -8px;
    top: 4px;
    bottom: 2px;
    width: 1px;
    background: #fff;
  }
  .glyph {
    width: 20px;
    height: 20px;
    overflow: visible;
  }
  .bottom .glyph {
    margin-top: 4px;
  }
  .arrow {
    position: absolute;
    left: 18px;
    bottom: 4px;
    border: 4px solid transparent;
    border-top-color: #000;
    border-bottom: 0;
  }
  .bottom .arrow {
    bottom: 3px;
  }
  .body-pick {
    appearance: none;
    width: 164px;
    height: 22px;
    margin: 10px 0 0;
    padding: 0 4px;
    border: 1px solid #d4d4dc;
    border-radius: 0;
    background: #e2e2e2;
    font: inherit;
    color: #111;
  }
  .chevron {
    position: absolute;
    right: 16px;
    top: 18px;
    width: 10px;
    height: 6px;
  }
  .brand {
    width: 42px;
    height: 32px;
    margin: 1px 5px 0 auto;
    overflow: visible;
    font-family: "Liberation Sans", sans-serif;
    font-style: italic;
  }
  .view {
    position: relative;
    overflow: hidden;
    border-left: 2px solid #777a80;
    background: linear-gradient(#55565e 0, #55565e 1px, #333263 2px, #393767 27%, #403e70 48%, #4a4778 63%, #62608a 75%, #7f7ea0 86%, #a4a3c0 97%, #aaa9bb 100%);
  }
  .scene {
    position: absolute;
    inset: 0 0 0 -2px;
    width: calc(100% + 2px);
    height: 100%;
  }
  .watermark {
    font-family: "Liberation Serif", serif;
    font-size: 143px;
    fill: #dcdcf0;
    fill-opacity: 0.04;
  }
  .edge {
    stroke: #080814;
    stroke-width: 2;
    stroke-linejoin: round;
  }
  .picked {
    fill: none;
    stroke: #f59230;
    stroke-width: 2;
  }
  .dash {
    stroke: #0a0a12;
    stroke-dasharray: 9 9;
  }
  .triad {
    fill: none;
    stroke: #fff;
  }
  .triad circle {
    fill: #fff;
  }
  .triad text,
  .names text {
    font-family: "DejaVu Sans", sans-serif;
    font-size: 12px;
    stroke: none;
    fill: #fff;
  }
  .names text {
    fill: #dbe02c;
  }
  .compass {
    fill: url(#weave);
    stroke: #dcd6fa;
    stroke-width: 2;
  }
  .compass circle {
    fill: #d6cef4;
  }
  .tree {
    position: relative;
    width: max-content;
    color: #fff;
    font-size: 18px;
  }
  .row {
    position: relative;
    display: flex;
    align-items: center;
    gap: 4px;
    height: 39px;
  }
  .root {
    padding-left: 1px;
  }
  .root .label {
    background: none;
  }
  .art {
    width: 33px;
    height: 33px;
    margin-bottom: 6px;
  }
  .label {
    line-height: 30px;
    padding: 0 2px 0 0;
    background: rgba(44, 42, 92, 0.35);
  }
  .active {
    line-height: 29px;
    background: #ff8209;
    text-decoration: underline;
    text-decoration-thickness: 2px;
    text-underline-offset: 2px;
  }
  .branch {
    position: relative;
    list-style: none;
    margin: 0 0 0 10px;
    padding: 0;
  }
  .branch .branch {
    margin-left: 26px;
  }
  .branch::before {
    content: "";
    position: absolute;
    left: 0;
    top: -10px;
    width: 2px;
    height: 10px;
    background: #fff;
  }
  .branch li {
    position: relative;
    border-left: 2px solid #fff;
  }
  .branch li:last-child {
    border-left-color: transparent;
  }
  .branch li:last-child::before {
    content: "";
    position: absolute;
    left: -2px;
    top: 0;
    width: 2px;
    height: 19px;
    background: #fff;
  }
  .branch .row {
    padding-left: 17px;
  }
  .branch .row::before {
    content: "";
    position: absolute;
    left: 0;
    top: 17px;
    width: 16px;
    height: 2px;
    background: #fff;
  }
  .knob {
    position: absolute;
    left: -9px;
    top: 10px;
    width: 16px;
    height: 16px;
    border-radius: 50%;
    background:
      linear-gradient(#000, #000) center / 12px 3px no-repeat,
      linear-gradient(#000, #000) center / 3px 12px no-repeat,
      radial-gradient(circle at 40% 30%, #c4c4c4, #77777c);
  }
  .minus {
    background:
      linear-gradient(#000, #000) center / 12px 3px no-repeat,
      radial-gradient(circle at 40% 30%, #c4c4c4, #77777c);
  }
  .side {
    display: flex;
    flex-direction: column;
    padding-top: 5px;
    background: linear-gradient(90deg, #fff 0, #fff 4px, #dddcf0 8px, #cfcee8 12px, #cdcce4 29px, #aaa9bf 37px);
  }
  .side .group {
    flex-direction: column;
    padding-left: 10px;
  }
  .side .grip {
    width: 16px;
    height: 3px;
    margin: 0 0 10px -5px;
    border: 0;
    border-bottom: 1px solid #9b9ab0;
  }
  .side .tool {
    display: flex;
    align-items: flex-start;
    width: 28px;
  }
  .side .arrow {
    left: 18px;
    top: 21px;
    bottom: auto;
  }
  .status {
    display: flex;
    gap: 2px;
    overflow: hidden;
    box-sizing: border-box;
    border-bottom: 2px solid #000;
    font-size: 12px;
  }
  .message {
    flex: 1;
    padding-left: 4px;
    line-height: 22px;
  }
  .command {
    width: 300px;
    height: 20px;
    margin-top: 2px;
    box-sizing: border-box;
    border: 1px solid #555;
    background: #fff;
  }
  .status button {
    width: 31px;
    height: 20px;
    margin-top: 2px;
    border: 1px solid #888;
    border-top-color: #fff;
    background: #c8c8d0;
  }
</style>
